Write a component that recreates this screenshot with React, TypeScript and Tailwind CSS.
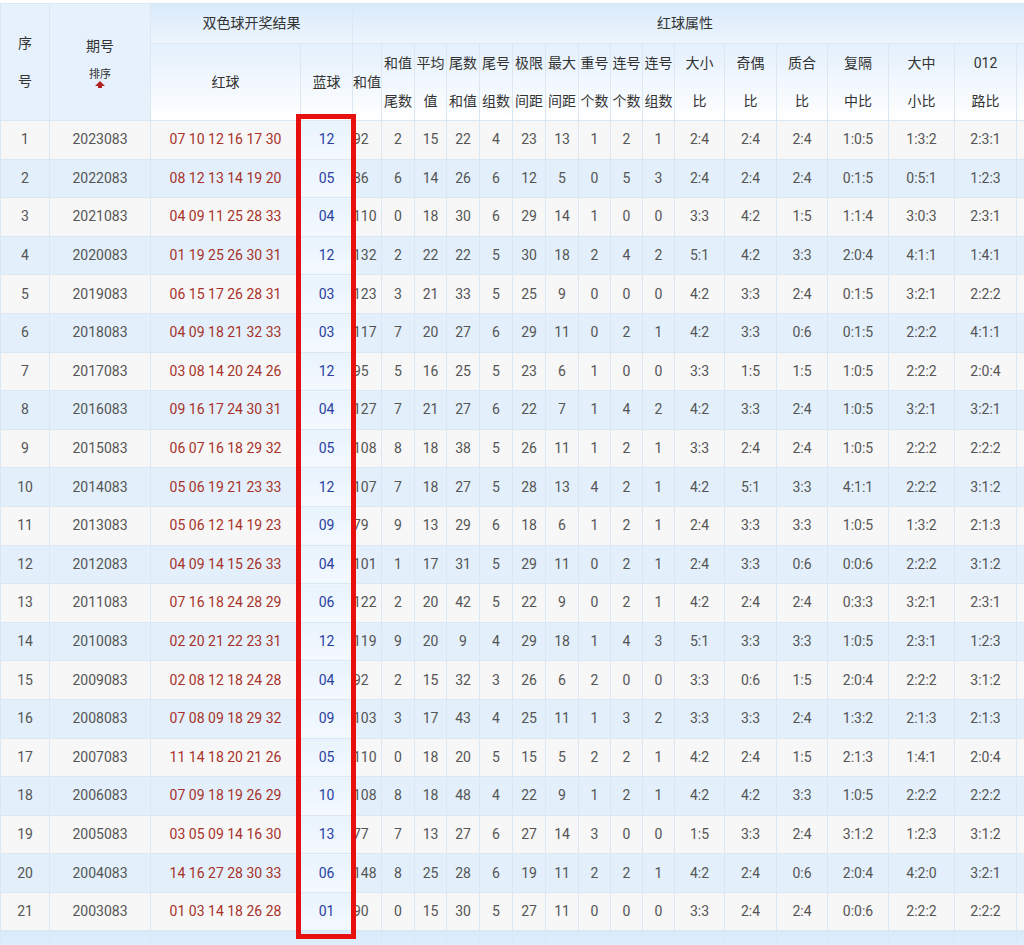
import React from 'react';

const rows: [string, string, string, string, ...string[]][] = [
  ['2023083', '07 10 12 16 17 30', '12', '92', '2', '15', '22', '4', '23', '13', '1', '2', '1', '2:4', '2:4', '2:4', '1:0:5', '1:3:2', '2:3:1'],
  ['2022083', '08 12 13 14 19 20', '05', '86', '6', '14', '26', '6', '12', '5', '0', '5', '3', '2:4', '2:4', '2:4', '0:1:5', '0:5:1', '1:2:3'],
  ['2021083', '04 09 11 25 28 33', '04', '110', '0', '18', '30', '6', '29', '14', '1', '0', '0', '3:3', '4:2', '1:5', '1:1:4', '3:0:3', '2:3:1'],
  ['2020083', '01 19 25 26 30 31', '12', '132', '2', '22', '22', '5', '30', '18', '2', '4', '2', '5:1', '4:2', '3:3', '2:0:4', '4:1:1', '1:4:1'],
  ['2019083', '06 15 17 26 28 31', '03', '123', '3', '21', '33', '5', '25', '9', '0', '0', '0', '4:2', '3:3', '2:4', '0:1:5', '3:2:1', '2:2:2'],
  ['2018083', '04 09 18 21 32 33', '03', '117', '7', '20', '27', '6', '29', '11', '0', '2', '1', '4:2', '3:3', '0:6', '0:1:5', '2:2:2', '4:1:1'],
  ['2017083', '03 08 14 20 24 26', '12', '95', '5', '16', '25', '5', '23', '6', '1', '0', '0', '3:3', '1:5', '1:5', '1:0:5', '2:2:2', '2:0:4'],
  ['2016083', '09 16 17 24 30 31', '04', '127', '7', '21', '27', '6', '22', '7', '1', '4', '2', '4:2', '3:3', '2:4', '1:0:5', '3:2:1', '3:2:1'],
  ['2015083', '06 07 16 18 29 32', '05', '108', '8', '18', '38', '5', '26', '11', '1', '2', '1', '3:3', '2:4', '2:4', '1:0:5', '2:2:2', '2:2:2'],
  ['2014083', '05 06 19 21 23 33', '12', '107', '7', '18', '27', '5', '28', '13', '4', '2', '1', '4:2', '5:1', '3:3', '4:1:1', '2:2:2', '3:1:2'],
  ['2013083', '05 06 12 14 19 23', '09', '79', '9', '13', '29', '6', '18', '6', '1', '2', '1', '2:4', '3:3', '3:3', '1:0:5', '1:3:2', '2:1:3'],
  ['2012083', '04 09 14 15 26 33', '04', '101', '1', '17', '31', '5', '29', '11', '0', '2', '1', '2:4', '3:3', '0:6', '0:0:6', '2:2:2', '3:1:2'],
  ['2011083', '07 16 18 24 28 29', '06', '122', '2', '20', '42', '5', '22', '9', '0', '2', '1', '4:2', '2:4', '2:4', '0:3:3', '3:2:1', '2:3:1'],
  ['2010083', '02 20 21 22 23 31', '12', '119', '9', '20', '9', '4', '29', '18', '1', '4', '3', '5:1', '3:3', '3:3', '1:0:5', '2:3:1', '1:2:3'],
  ['2009083', '02 08 12 18 24 28', '04', '92', '2', '15', '32', '3', '26', '6', '2', '0', '0', '3:3', '0:6', '1:5', '2:0:4', '2:2:2', '3:1:2'],
  ['2008083', '07 08 09 18 29 32', '09', '103', '3', '17', '43', '4', '25', '11', '1', '3', '2', '3:3', '3:3', '2:4', '1:3:2', '2:1:3', '2:1:3'],
  ['2007083', '11 14 18 20 21 26', '05', '110', '0', '18', '20', '5', '15', '5', '2', '2', '1', '4:2', '2:4', '1:5', '2:1:3', '1:4:1', '2:0:4'],
  ['2006083', '07 09 18 19 26 29', '10', '108', '8', '18', '48', '4', '22', '9', '1', '2', '1', '4:2', '4:2', '3:3', '1:0:5', '2:2:2', '2:2:2'],
  ['2005083', '03 05 09 14 16 30', '13', '77', '7', '13', '27', '6', '27', '14', '3', '0', '0', '1:5', '3:3', '2:4', '3:1:2', '1:2:3', '3:1:2'],
  ['2004083', '14 16 27 28 30 33', '06', '148', '8', '25', '28', '6', '19', '11', '2', '2', '1', '4:2', '2:4', '0:6', '2:0:4', '4:2:0', '3:2:1'],
  ['2003083', '01 03 14 18 26 28', '01', '90', '0', '15', '30', '5', '27', '11', '0', '0', '0', '3:3', '2:4', '2:4', '0:0:6', '2:2:2', '2:2:2'],
];

const widths = [49, 101, 150, 52, 29, 33, 32, 33, 33, 33, 33, 32, 32, 32, 50, 52, 51, 61, 66, 62, 40];

const attrHeads: [string, string][] = [
  ['和值', '尾数'], ['平均', '值'], ['尾数', '和值'], ['尾号', '组数'], ['极限', '间距'], ['最大', '间距'],
  ['重号', '个数'], ['连号', '个数'], ['连号', '组数'], ['大小', '比'], ['奇偶', '比'], ['质合', '比'],
  ['复隔', '中比'], ['大中', '小比'], ['012', '路比'], ['', ''],
];

const td = 'border border-[#dbe7f3] text-center p-0';

export default function App() {
  return (
    <div className="relative w-[1024px] h-[945px] overflow-hidden bg-white" style={{ fontFamily: 'Roboto, "Noto Sans CJK SC", sans-serif' }}>
      <table className="table-fixed border-collapse w-[1056px] text-[14px] mt-[3px]">
        <colgroup>
          {widths.map((w, i) => (
            <col key={i} style={{ width: w }} />
          ))}
        </colgroup>
        <thead>
          <tr className="h-[40px] bg-gradient-to-b from-[#d9eafb] to-[#edf5fd]">
            <th rowSpan={2} className={`${td} font-normal text-[#333] leading-[38px] bg-[#e6f1fc]`}>
              <div>序</div>
              <div>号</div>
            </th>
            <th rowSpan={2} className={`${td} font-normal text-[#333] bg-[#e6f1fc]`}>
              <div>期号</div>
              <div className="text-[11px] mt-[12px] leading-none">排序</div>
              <div className="flex justify-center mt-[1px]">
                <svg width="10" height="7" viewBox="0 0 10 7"><path d="M5 0 L10 5 L7 5 L7 7 L3 7 L3 5 L0 5 Z" fill="#b22222" /></svg>
              </div>
            </th>
            <th colSpan={2} className={`${td} font-normal text-[#333]`}>双色球开奖结果</th>
            <th colSpan={17} className={`${td} font-normal text-[#333] text-left`}>
              <span className="inline-block w-[664px] text-center">红球属性</span>
            </th>
          </tr>
          <tr className="h-[75px] bg-gradient-to-b from-[#e4f0fc] to-white">
            <th className={`${td} font-normal text-[#333]`}>红球</th>
            <th className={`${td} font-normal text-[#333]`}>蓝球</th>
            <th className={`${td} font-normal text-[#333]`}>和值</th>
            {attrHeads.map(([a, b], i) => (
              <th key={i} className={`${td} font-normal text-[#333] leading-[38px]`}>
                <div>{a}</div>
                <div>{b}</div>
              </th>
            ))}
          </tr>
        </thead>
        <tbody>
          {rows.map((r, i) => (
            <tr key={i} className={`h-[38.6px] text-[#555] ${i % 2 ? 'bg-[#e3f0fb]' : 'bg-[#f7f7f7]'}`}>
              <td className={td}>{i + 1}</td>
              <td className={td}>{r[0]}</td>
              <td className={`${td} text-[#a8322a]`}>{r[1]}</td>
              <td className={`${td} text-[#2a3f9e] bg-gradient-to-b from-[#e8f3fd] to-[#f4f9fe]`}>{r[2]}</td>
              {r.slice(3).map((c, j) => (
                <td key={j} className={`${td} ${j === 0 ? 'text-left' : ''}`}>{c}</td>
              ))}
              <td className={td}></td>
            </tr>
          ))}
          <tr className="h-[75px] bg-gradient-to-b from-[#d9eafb] to-white">
            <td className={td}></td>
            <td className={td}></td>
            <td className={td}></td>
            <td className={td}></td>
            <td className={`${td} text-[#333] leading-[38px] align-top pt-[18px]`}>和值</td>
            {attrHeads.map(([a, b], i) => (
              <td key={i} className={`${td} text-[#333] leading-[38px] align-top pt-[18px]`}>
                <div>{a}</div>
                <div>{b}</div>
              </td>
            ))}
          </tr>
        </tbody>
      </table>
      <div className="absolute left-[296px] top-[114px] w-[60px] h-[825px] border-[5px] border-[#e8100f]" />
    </div>
  );
}
